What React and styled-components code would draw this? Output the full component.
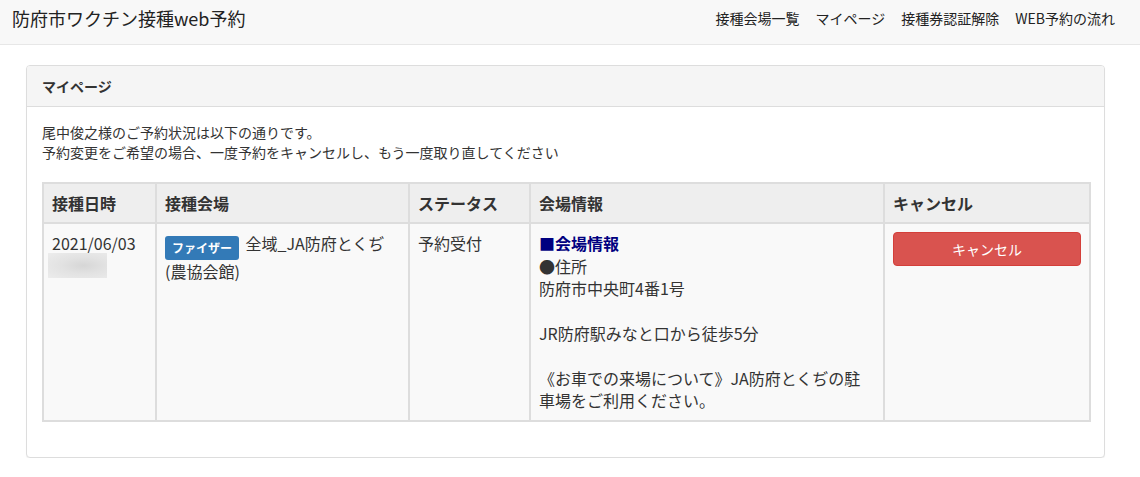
import styled, { createGlobalStyle } from "styled-components";

const GlobalStyle = createGlobalStyle`
  html, body {
    margin: 0;
    padding: 0;
    background: #fff;
  }
  body {
    font-family: "Noto Sans CJK JP", "Noto Sans", sans-serif;
    font-size: 14px;
    line-height: 20px;
    color: #333;
  }
  * {
    box-sizing: border-box;
  }
`;

const navItems = ["接種会場一覧", "マイページ", "接種券認証解除", "WEB予約の流れ"];

const columns = [
  { label: "接種日時", width: 113 },
  { label: "接種会場", width: 253 },
  { label: "ステータス", width: 121 },
  { label: "会場情報", width: 354 },
  { label: "キャンセル", width: 206 },
];

const App = () => {
  return (
    <>
      <GlobalStyle />
      <StHeader>
        <StBrand>防府市ワクチン接種web予約</StBrand>
        <StNav>
          {navItems.map((item) => (
            <StNavLink key={item}>{item}</StNavLink>
          ))}
        </StNav>
      </StHeader>

      <StMain>
        <StPanel>
          <StPanelHeading>マイページ</StPanelHeading>
          <StPanelBody>
            <StLead>
              尾中俊之様のご予約状況は以下の通りです。
              <br />
              予約変更をご希望の場合、一度予約をキャンセルし、もう一度取り直してください
            </StLead>

            <StTable>
              <colgroup>
                {columns.map((col) => (
                  <StCol key={col.label} $width={col.width} />
                ))}
              </colgroup>
              <thead>
                <tr>
                  {columns.map((col) => (
                    <StTh key={col.label}>{col.label}</StTh>
                  ))}
                </tr>
              </thead>
              <tbody>
                <tr>
                  <StTd>
                    2021/06/03
                    <StBlurred />
                  </StTd>
                  <StTd>
                    <StBadge>ファイザー</StBadge> 全域_JA防府とくぢ(農協会館)
                  </StTd>
                  <StTd>予約受付</StTd>
                  <StTd>
                    <StInfoTitle>■会場情報</StInfoTitle>
                    <br />
                    ●住所
                    <br />
                    防府市中央町4番1号
                    <br />
                    <br />
                    JR防府駅みなと口から徒歩5分
                    <br />
                    <br />
                    《お車での来場について》JA防府とくぢの駐車場をご利用ください。
                  </StTd>
                  <StTd>
                    <StCancelButton type="button">キャンセル</StCancelButton>
                  </StTd>
                </tr>
              </tbody>
            </StTable>
          </StPanelBody>
        </StPanel>
      </StMain>
    </>
  );
};

const StHeader = styled.header`
  height: 45px;
  display: flex;
  align-items: center;
  justify-content: space-between;
  padding: 0 25px 8px 12px;
  background: #f8f8f8;
  border-bottom: 1px solid #e7e7e7;
`;

const StBrand = styled.div`
  font-size: 18px;
  line-height: 24px;
  color: #222;
`;

const StNav = styled.nav`
  display: flex;
  align-items: center;
  gap: 16px;
`;

const StNavLink = styled.a`
  font-size: 14px;
  line-height: 20px;
  color: #222;
  text-decoration: none;
  cursor: pointer;
`;

const StMain = styled.main`
  padding: 20px 35px 0 26px;
`;

const StPanel = styled.section`
  border: 1px solid #ddd;
  border-radius: 4px;
  background: #fff;
  box-shadow: 0 1px 1px rgba(0, 0, 0, 0.05);
`;

const StPanelHeading = styled.div`
  padding: 10px 15px;
  background: #f5f5f5;
  border-bottom: 1px solid #ddd;
  border-radius: 3px 3px 0 0;
  font-size: 14px;
  font-weight: 700;
  line-height: 20px;
  color: #333;
`;

const StPanelBody = styled.div`
  padding: 15px;
`;

const StLead = styled.p`
  margin: 0 0 20px;
  font-size: 14px;
  line-height: 20px;
`;

const StTable = styled.table`
  width: 100%;
  table-layout: fixed;
  border-collapse: collapse;
  margin-bottom: 20px;
  font-size: 16px;
  line-height: 22.4px;
`;

const StCol = styled.col`
  width: ${({ $width }) => $width}px;
`;

const StTh = styled.th`
  padding: 8px;
  text-align: left;
  font-weight: 700;
  background: #eee;
  border: 2px solid #ddd;
`;

const StTd = styled.td`
  padding: 8px;
  vertical-align: top;
  background: #f9f9f9;
  border: 2px solid #ddd;
`;

const StBlurred = styled.div`
  width: 59px;
  height: 25px;
  margin: -2px 0 0 -4px;
  background: radial-gradient(
    ellipse at 60% 50%,
    #d6d6d6 0%,
    #e2e2e2 45%,
    #ececec 100%
  );
`;

const StBadge = styled.span`
  display: inline-block;
  padding: 4px 7px;
  margin-right: 3px;
  font-size: 12px;
  line-height: 16px;
  font-weight: 700;
  color: #fff;
  background: #337ab7;
  border-radius: 3px;
  vertical-align: -3px;
`;

const StInfoTitle = styled.span`
  font-weight: 700;
  color: #000080;
`;

const StCancelButton = styled.button`
  display: block;
  width: 100%;
  padding: 6px 12px;
  font-family: inherit;
  font-size: 14px;
  line-height: 20px;
  color: #fff;
  background: #d9534f;
  border: 1px solid #d43f3a;
  border-radius: 4px;
  cursor: pointer;
`;

export default App;
